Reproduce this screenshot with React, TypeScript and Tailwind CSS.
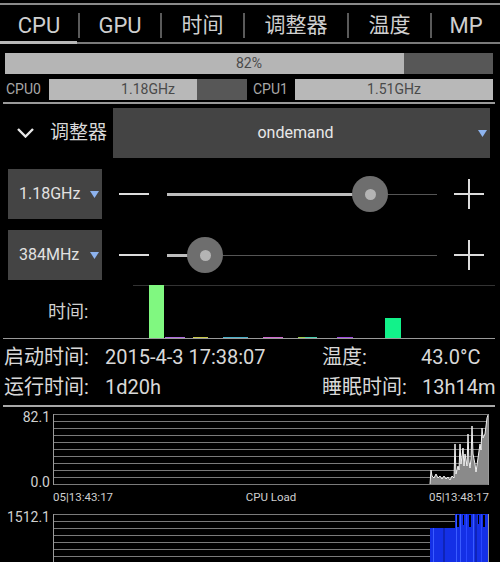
import React from "react";

const Tri = () => (
  <svg width="9" height="7" viewBox="0 0 9 7" className="shrink-0">
    <polygon points="0,0 9,0 4.5,7" fill="#8db3ee" />
  </svg>
);

const Plus = () => (
  <svg width="30" height="30" viewBox="0 0 30 30" className="shrink-0">
    <line x1="0" y1="15" x2="30" y2="15" stroke="#dcdcdc" strokeWidth="2" />
    <line x1="15" y1="0" x2="15" y2="30" stroke="#dcdcdc" strokeWidth="2" />
  </svg>
);

function FreqRow({ label, pos }: { label: string; pos: number }) {
  return (
    <div className="flex items-center h-[50px]">
      <div className="ml-[8px] w-[94px] h-[50px] bg-[#444444] flex items-center pl-[11px] pr-[3px]">
        <span className="text-[16px] text-[#e2e2e2] flex-1">{label}</span>
        <Tri />
      </div>
      <div className="ml-[17px] w-[30px] h-[2px] bg-[#dcdcdc]" />
      <div className="ml-[18px] w-[270px] h-[40px] relative flex items-center">
        <div className="h-[3px] bg-[#bdbdbd]" style={{ width: pos }} />
        <div className="flex-1 h-[1px] bg-[#555555]" />
        <div
          className="absolute top-[2px] w-[36px] h-[36px] rounded-full bg-[#6e6e6e] flex items-center justify-center"
          style={{ left: pos - 18 }}
        >
          <div className="w-[11px] h-[11px] rounded-full bg-[#b4b4b4]" />
        </div>
      </div>
      <div className="ml-[17px]">
        <Plus />
      </div>
    </div>
  );
}

function Grid({ children }: { children?: React.ReactNode }) {
  const lines = [];
  for (let i = 0; i <= 10; i++) {
    lines.push(
      <line key={i} x1="0" x2="436" y1={i * 7 + 0.5} y2={i * 7 + 0.5} stroke="#7a7a7a" strokeWidth="1" />
    );
  }
  return (
    <svg width="436" height="71" viewBox="0 0 436 71" className="shrink-0">
      {lines}
      {children}
      <line x1="0.5" y1="0" x2="0.5" y2="71" stroke="#9a9a9a" strokeWidth="1" />
      <line x1="435.5" y1="0" x2="435.5" y2="71" stroke="#9a9a9a" strokeWidth="1" />
    </svg>
  );
}

const loadPts =
  "377,70 378,56 379,62 381,64 383,60 385,64 387,62 389,65 391,62 393,65 395,63 397,66 399,62 401,64 402,30 403,60 405,52 406,56 407,30 408,50 410,34 411,52 412,40 414,52 415,20 416,48 417,54 418,45 419,12 420,40 422,50 423,58 425,44 427,30 428,36 429,14 430,24 432,20 434,4 435,1";

export default function App() {
  const tabs = [
    { label: "CPU", w: "w-[78px]", t: "text-[22px]" },
    { label: "GPU", w: "w-[80px]", t: "text-[22px]" },
    { label: "时间", w: "w-[81px]", t: "text-[21px]" },
    { label: "调整器", w: "w-[102px]", t: "text-[21px]" },
    { label: "温度", w: "w-[81px]", t: "text-[21px]" },
    { label: "MP", w: "w-[68px]", t: "text-[22px]" },
  ];
  return (
    <div className="w-[500px] h-[562px] bg-black overflow-hidden font-['Roboto','Noto_Sans_CJK_SC',sans-serif] text-[#d8d8d8]">
      <div className="mt-[3px] h-[2px] bg-[#8a8a8a]" />
      {/* tabs */}
      <div className="h-[36px] pt-[5px] flex items-center">
        {tabs.map((t, i) => (
          <React.Fragment key={t.label}>
            {i > 0 && <div className="w-[2px] h-[25px] bg-[#5a5a5a]" />}
            <div className={`${t.w} ${t.t} text-center text-[#cfcfcf] leading-none`}>{t.label}</div>
          </React.Fragment>
        ))}
      </div>
      <div className="h-[3px] flex items-end">
        <div className="w-[77px] h-[3px] bg-[#b8b8b8]" />
        <div className="flex-1 h-[2px] bg-[#7a7a7a]" />
      </div>
      {/* total load bar */}
      <div className="mt-[9px] ml-[5px] w-[488px] h-[21px] flex relative">
        <div className="w-[399px] bg-[#b5b5b5]" />
        <div className="flex-1 bg-[#575757]" />
        <div className="absolute inset-0 flex items-center justify-center text-[14px] text-[#4a4a4a]">82%</div>
      </div>
      {/* cpu rows */}
      <div className="mt-[5px] h-[21px] flex items-center">
        <div className="w-[49px] pl-[6px] text-[14px] text-[#a8a8a8]">CPU0</div>
        <div className="w-[198px] h-[21px] flex relative">
          <div className="w-[148px] bg-[#b8b8b8]" />
          <div className="flex-1 bg-[#575757]" />
          <div className="absolute inset-0 flex items-center justify-center text-[14px] text-[#4a4a4a]">1.18GHz</div>
        </div>
        <div className="w-[48px] pl-[6px] text-[14px] text-[#a8a8a8]">CPU1</div>
        <div className="w-[198px] h-[21px] bg-[#b8b8b8] flex items-center justify-center text-[14px] text-[#4a4a4a]">
          1.51GHz
        </div>
      </div>
      <div className="mt-[2px] ml-[3px] w-[492px] h-[2px] bg-[#9a9a9a]" />
      {/* governor */}
      <div className="mt-[4px] h-[50px] flex items-center">
        <div className="w-[113px] flex items-center">
          <svg width="17" height="10" viewBox="0 0 17 10" className="ml-[17px] shrink-0">
            <polyline points="1,1 8.5,8.5 16,1" fill="none" stroke="#e8e8e8" strokeWidth="2.4" />
          </svg>
          <span className="ml-[16px] text-[19px] text-[#d8d8d8]">调整器</span>
        </div>
        <div className="w-[377px] h-[50px] bg-[#444444] flex items-center pr-[3px]">
          <span className="flex-1 text-center text-[16px] text-[#e8e8e8]">ondemand</span>
          <Tri />
        </div>
      </div>
      <div className="mt-[11px]">
        <FreqRow label="1.18GHz" pos={203} />
      </div>
      <div className="mt-[11px]">
        <FreqRow label="384MHz" pos={38} />
      </div>
      {/* time bars */}
      <div className="mt-[5px] h-[53px] flex">
        <div className="w-[133px] pl-[48px] flex items-center text-[18px] text-[#d0d0d0]">时间:</div>
        <svg width="362" height="53" viewBox="0 0 362 53" className="shrink-0">
          <line x1="0" x2="362" y1="0.5" y2="0.5" stroke="#333333" />
          <rect x="16" y="0" width="15" height="53" fill="#80f880" />
          <rect x="252" y="33" width="16" height="20" fill="#12f28a" />
          <rect x="32" y="52" width="20" height="1" fill="#b06be0" />
          <rect x="60" y="52" width="15" height="1" fill="#c9c94a" />
          <rect x="90" y="52" width="25" height="1" fill="#4ab0c9" />
          <rect x="130" y="52" width="20" height="1" fill="#d06ad0" />
          <rect x="165" y="52" width="15" height="1" fill="#9ad04a" />
          <rect x="172" y="52" width="12" height="1" fill="#4ad0b0" />
          <rect x="204" y="52" width="16" height="1" fill="#a04ae0" />
        </svg>
      </div>
      <div className="ml-[3px] w-[492px] h-[1px] bg-[#9a9a9a]" />
      {/* info */}
      <div className="mt-[3px] h-[30px] flex items-center text-[20px]">
        <div className="w-[101px] ml-[4px]">启动时间:</div>
        <div className="w-[217px]">2015-4-3 17:38:07</div>
        <div className="w-[99px]">温度:</div>
        <div>43.0°C</div>
      </div>
      <div className="h-[30px] flex items-center text-[20px]">
        <div className="w-[101px] ml-[4px]">运行时间:</div>
        <div className="w-[217px]">1d20h</div>
        <div className="w-[100px]">睡眠时间:</div>
        <div>13h14m</div>
      </div>
      <div className="mt-[3px] ml-[3px] w-[492px] h-[2px] bg-[#a8a8a8]" />
      {/* chart 1 */}
      <div className="mt-[7px] flex items-start">
        <div className="w-[53px] h-[79px] -mt-[4px] pr-[3px] flex flex-col justify-between items-end text-[14px] leading-[14px] text-[#d0d0d0]">
          <span>82.1</span>
          <span>0.0</span>
        </div>
        <Grid>
          <polygon points={loadPts + " 435,70 377,70"} fill="#8a8a8a" />
          <polyline points={loadPts} fill="none" stroke="#f2f2f2" strokeWidth="1" />
        </Grid>
      </div>
      <div className="mt-[1px] ml-[53px] w-[436px] h-[14px] flex justify-between items-center text-[11.5px] text-[#cfcfcf] leading-[14px]">
        <span>05|13:43:17</span>
        <span>CPU Load</span>
        <span>05|13:48:17</span>
      </div>
      {/* chart 2 */}
      <div className="mt-[10px] flex items-start">
        <div className="w-[53px] h-[79px] -mt-[4px] pr-[3px] flex flex-col items-end text-[14px] leading-[14px] text-[#d0d0d0]">
          <span>1512.1</span>
        </div>
        <Grid>
          <rect x="377" y="14" width="25" height="57" fill="#1430e6" />
          <rect x="402" y="0" width="34" height="71" fill="#1430e6" />
          <rect x="404" y="1" width="2" height="12" fill="#000000" />
          <rect x="410" y="1" width="1" height="10" fill="#000000" />
          <rect x="416" y="1" width="2" height="12" fill="#000000" />
          <rect x="425" y="1" width="1" height="9" fill="#000000" />
          <rect x="430" y="1" width="2" height="12" fill="#000000" />
          <rect x="380" y="14" width="1" height="57" fill="#3a5cff" />
          <rect x="403" y="0" width="1" height="71" fill="#3a5cff" />
          <rect x="407" y="0" width="1" height="71" fill="#3a5cff" />
          <rect x="413" y="0" width="1" height="71" fill="#2a48ff" />
          <rect x="420" y="0" width="1" height="71" fill="#3a5cff" />
          <rect x="428" y="0" width="1" height="71" fill="#2a48ff" />
          <rect x="390" y="14" width="2" height="57" fill="#0f24b8" />
          <rect x="422" y="0" width="2" height="71" fill="#0f24b8" />
        </Grid>
      </div>
    </div>
  );
}
